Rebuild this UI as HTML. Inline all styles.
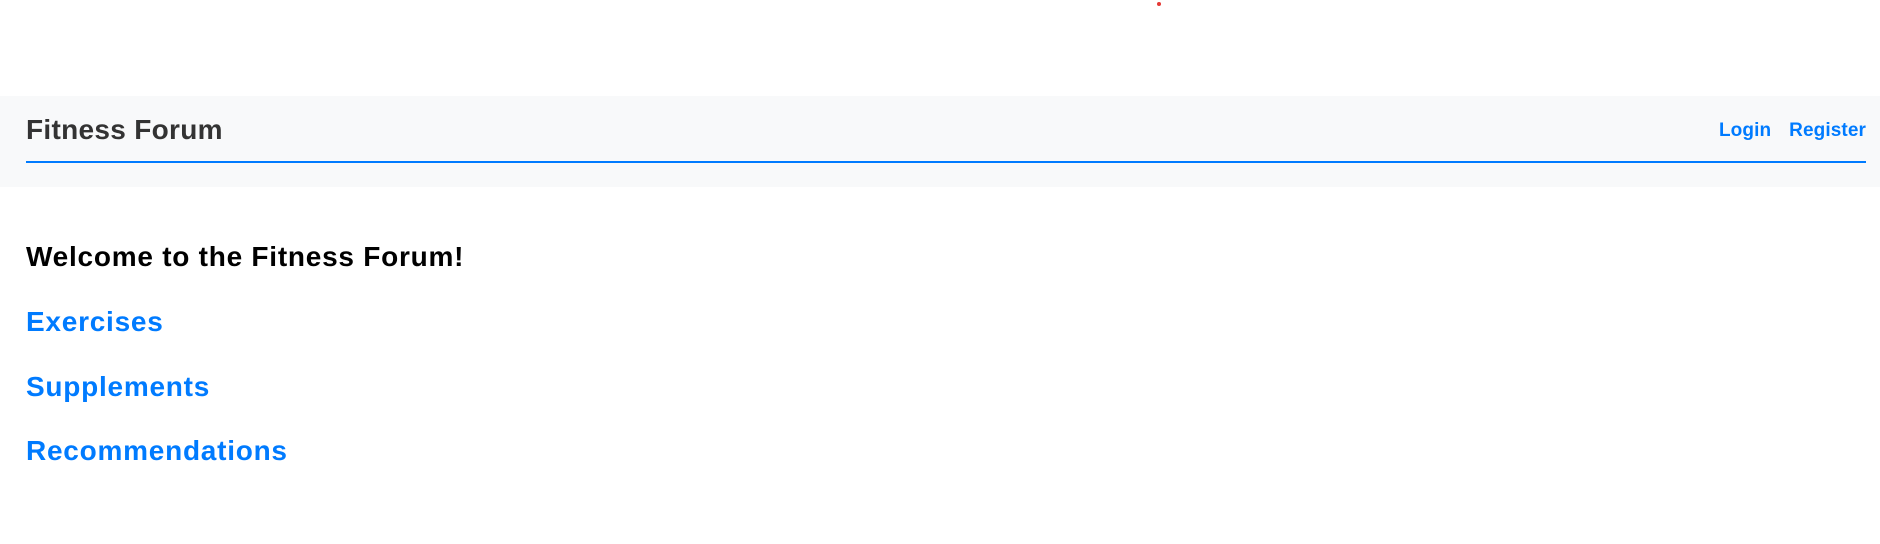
<!DOCTYPE html>
<html><head><meta charset="utf-8"><style>
body{margin:0;width:1880px;height:544px;background:#fff;font-family:"Liberation Sans",Arial,sans-serif;position:relative;overflow:hidden}
.dot{position:absolute;left:1157px;top:2px;width:4px;height:4px;border-radius:50%;background:#e53935}
.nav{position:absolute;left:0;top:96px;width:1880px;height:91px;background:#f8f9fa}
.title{position:absolute;left:26px;top:114px;font-size:28px;font-weight:bold;color:#333;letter-spacing:0.3px}
.links{position:absolute;right:14px;top:120px;font-size:19px;font-weight:bold;color:#007bff;letter-spacing:0.1px}
.links span{margin-left:18px}
.line{position:absolute;left:26px;top:161px;width:1840px;height:2px;background:#007bff}
.h{position:absolute;left:26px;font-size:28px;font-weight:bold;letter-spacing:0.75px}
</style></head><body>
<div class="dot"></div>
<div class="nav"></div>
<div class="title">Fitness Forum</div>
<div class="links"><span>Login</span><span>Register</span></div>
<div class="line"></div>
<div class="h" style="top:241px;color:#000">Welcome to the Fitness Forum!</div>
<div class="h" style="top:306px;color:#007bff">Exercises</div>
<div class="h" style="top:371px;color:#007bff">Supplements</div>
<div class="h" style="top:435px;color:#007bff">Recommendations</div>
</body></html>
